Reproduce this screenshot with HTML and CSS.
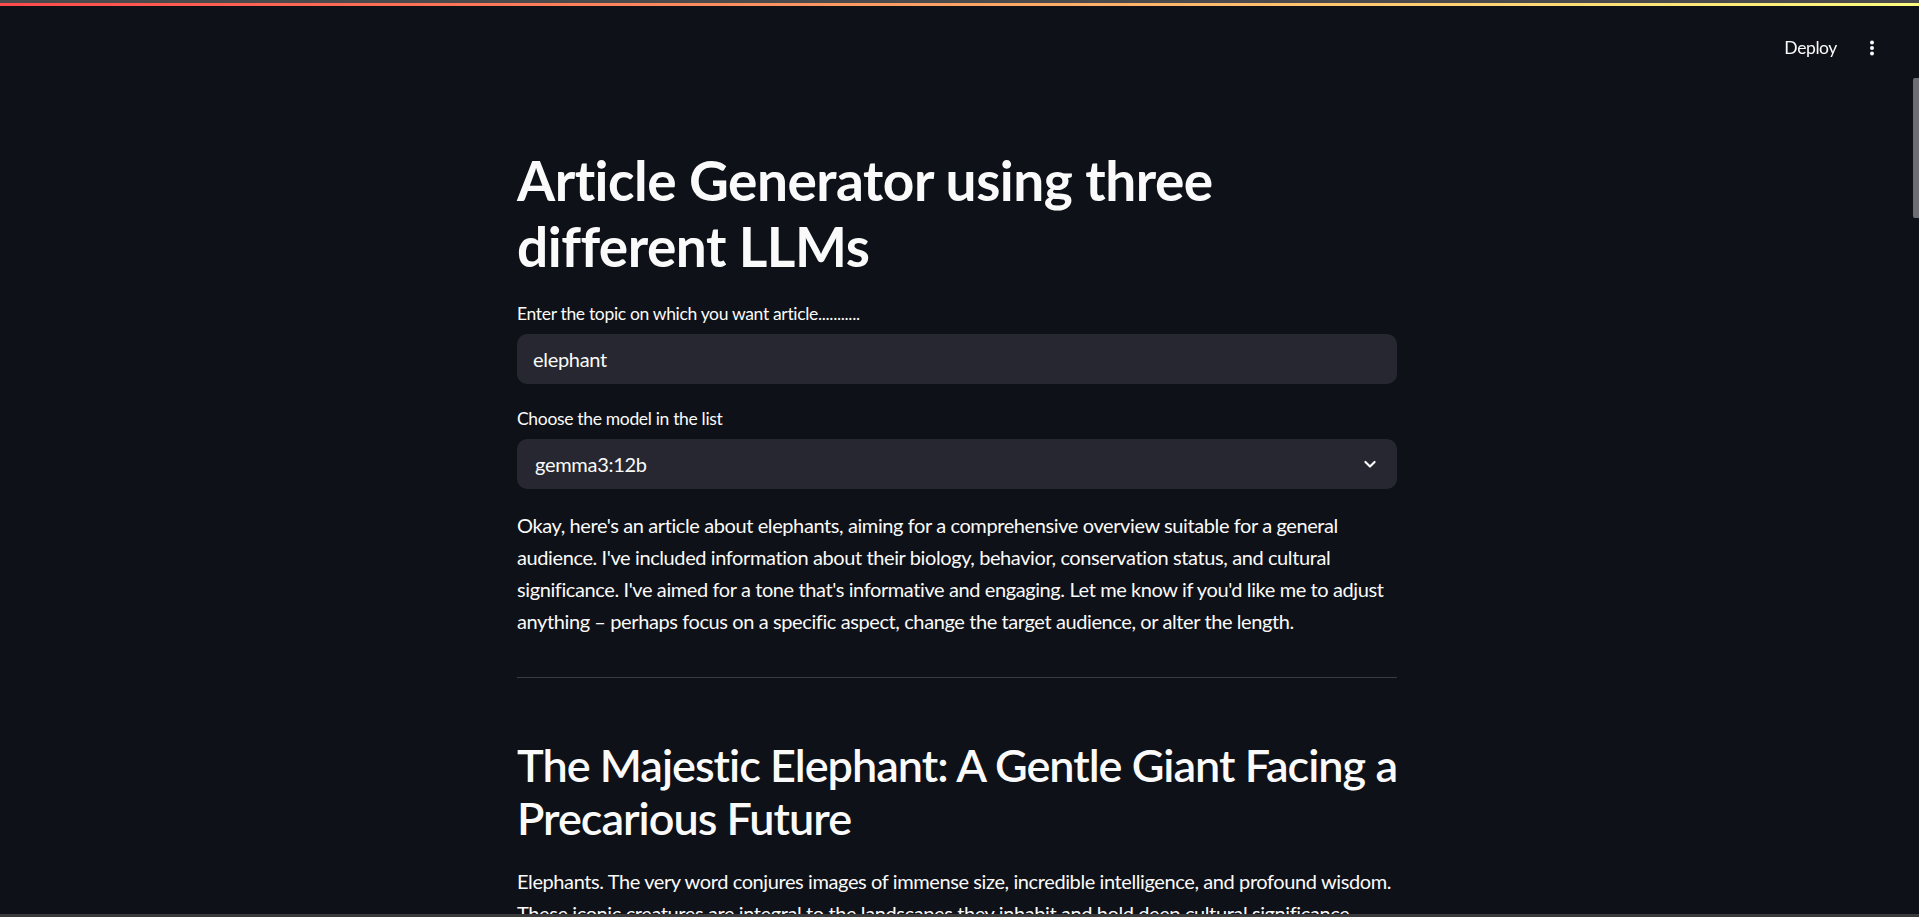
FILE: index.html
```html
<!DOCTYPE html>
<html lang="en">
<head>
<meta charset="utf-8">
<title>Article Generator</title>
<link rel="stylesheet" href="styles.css">
</head>
<body>
<div class="decoration"></div>
<header class="app-header">
  <button class="deploy">Deploy</button>
  <button class="menu" aria-label="Main menu">
    <svg width="6" height="16" viewBox="0 0 6 16"><circle cx="3" cy="2.5" r="2" fill="#fafafa"/><circle cx="3" cy="8" r="2" fill="#fafafa"/><circle cx="3" cy="13.5" r="2" fill="#fafafa"/></svg>
  </button>
</header>
<main class="main">
  <div class="block">
    <h1 class="title">Article Generator using three different LLMs</h1>
    <div class="field">
      <label class="label">Enter the topic on which you want article...........</label>
      <div class="input">elephant</div>
    </div>
    <div class="field">
      <label class="label">Choose the model in the list</label>
      <div class="select">
        <span>gemma3:12b</span>
        <svg width="20" height="20" viewBox="0 0 24 24"><path d="M6.5 9.5 12 15l5.5-5.5" fill="none" stroke="#fafafa" stroke-width="2.6" stroke-linecap="round" stroke-linejoin="round"/></svg>
      </div>
    </div>
    <div class="markdown">
      <p>Okay, here's an article about elephants, aiming for a comprehensive overview suitable for a general audience. I've included information about their biology, behavior, conservation status, and cultural significance. I've aimed for a tone that's informative and engaging. Let me know if you'd like me to adjust anything – perhaps focus on a specific aspect, change the target audience, or alter the length.</p>
      <hr>
      <h2>The Majestic Elephant: A Gentle Giant Facing a Precarious Future</h2>
      <p>Elephants. The very word conjures images of immense size, incredible intelligence, and profound wisdom. These iconic creatures are integral to the landscapes they inhabit and hold deep cultural significance across many human societies.</p>
    </div>
  </div>
</main>
<div class="scroll-thumb"></div>
<div class="bottom-bar"></div>
</body>
</html>
```

FILE: styles.css
```css
html, body {
  margin: 0;
  padding: 0;
  height: 100%;
  overflow: hidden;
  background: #0e1117;
  color: #fafafa;
  font-family: "Lato", "Noto Sans", sans-serif;
}

.decoration {
  position: fixed;
  top: 0;
  left: 0;
  right: 0;
  height: 6px;
  border-top: 3px solid #4a4a4c;
  box-sizing: border-box;
  background: linear-gradient(90deg, #ff4b4b, #fffd80);
  z-index: 5;
}

.app-header {
  position: fixed;
  top: 0;
  left: 0;
  right: 0;
  height: 75px;
  display: flex;
  justify-content: flex-end;
  align-items: flex-start;
  gap: 32px;
  box-sizing: border-box;
  padding: 37px 44px 0 0;
}

.deploy {
  background: none;
  border: none;
  color: #fafafa;
  font-family: inherit;
  font-size: 17.5px;
  letter-spacing: -0.4px;
  padding: 0;
  line-height: 22px;
}

.menu {
  background: none;
  border: none;
  padding: 0;
  margin-top: 3px;
  display: flex;
}

.main {
  display: flex;
  justify-content: center;
  padding-right: 5px;
}

.block {
  width: 880px;
  padding-top: 147px;
  display: flex;
  flex-direction: column;
}

.title {
  margin: 0;
  font-size: 55px;
  line-height: 66px;
  font-weight: 700;
  letter-spacing: -0.5px;
}

.field {
  display: flex;
  flex-direction: column;
  margin-top: 24px;
}

.label {
  font-size: 17.5px;
  line-height: 22px;
  height: 22px;
  margin-bottom: 9px;
  letter-spacing: -0.33px;
}

.input, .select {
  height: 50px;
  border-radius: 10px;
  background: #262730;
  box-sizing: border-box;
  font-size: 20px;
  letter-spacing: -0.3px;
  display: flex;
  align-items: center;
}

.input {
  padding-left: 16px;
}

.select {
  padding: 0 17px 0 18px;
  justify-content: space-between;
}

.markdown {
  margin-top: 20px;
  font-size: 20px;
  line-height: 32px;
  letter-spacing: -0.4px;
}

.markdown p {
  margin: 0 0 20px 0;
}

.markdown hr {
  border: none;
  border-top: 1px solid #3a3b43;
  margin: 40px 0 0 0;
}

.markdown h2 {
  margin: 61px 0 0 0;
  font-size: 45px;
  line-height: 53px;
  font-weight: 600;
  letter-spacing: -1px;
  padding-bottom: 20px;
}

.scroll-thumb {
  position: fixed;
  right: 0;
  top: 78px;
  width: 6px;
  height: 140px;
  background: #6d6d72;
  border-radius: 2px 0 0 2px;
}

.bottom-bar {
  position: fixed;
  left: 0;
  right: 0;
  bottom: 0;
  height: 3px;
  background: #3a3a3a;
}
```
